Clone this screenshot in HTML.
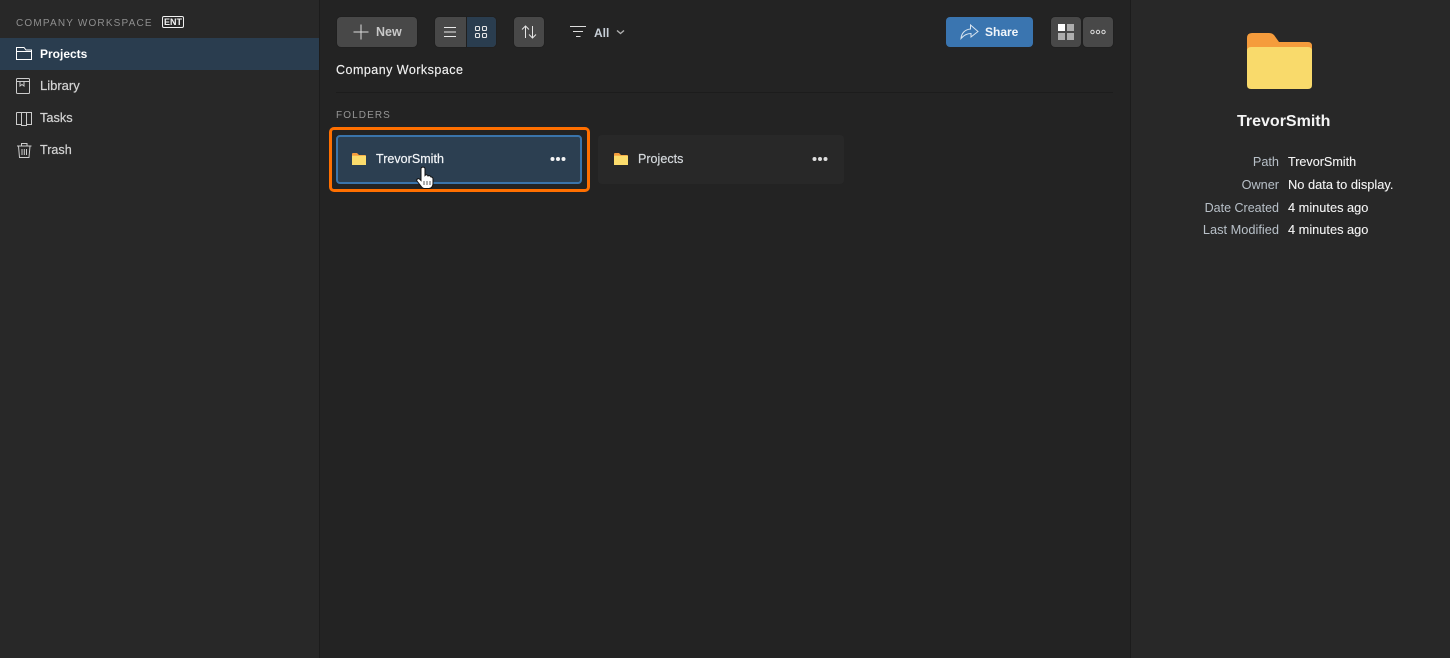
<!DOCTYPE html>
<html><head><meta charset="utf-8"><style>
html,body{margin:0;padding:0;width:1450px;height:658px;overflow:hidden;background:#232323;font-family:"Liberation Sans",sans-serif;color:#fff}
.a{position:absolute}
.t{position:absolute;white-space:nowrap;line-height:16px}
.btn{position:absolute;background:#484848;border-radius:4px;box-shadow:0 0 0 1px #202020}
svg{position:absolute;overflow:visible}
</style></head><body>
<div class="a" style="left:0;top:0;width:319px;height:658px;background:#282828"></div>
<div class="a" style="left:319px;top:0;width:1px;height:658px;background:#1c1c1c"></div>
<div class="a" style="left:1130px;top:0;width:1px;height:658px;background:#1c1c1c"></div>
<div class="a" style="left:1131px;top:0;width:319px;height:658px;background:#282828"></div>
<div class="t" style="left:16px;top:16px;font-size:10px;letter-spacing:1.18px;color:#8f8f8f">COMPANY WORKSPACE</div>
<div class="a" style="left:162px;top:16px;width:22px;height:12px;border:1px solid #f0f0f0;border-radius:2px;box-sizing:border-box;font-size:9px;line-height:10px;text-align:center;font-weight:bold;color:#f4f4f4">ENT</div>
<div class="a" style="left:0;top:38px;width:319px;height:32px;background:#2a3d4f"></div>
<div class="t" style="left:40px;top:46px;font-size:12px;font-weight:bold;color:#fff">Projects</div>
<div class="t" style="left:40px;top:78px;font-size:13px;color:#d4d4d4;-webkit-text-stroke:.2px #d4d4d4">Library</div>
<div class="t" style="left:40px;top:110px;font-size:12.8px;color:#d4d4d4;-webkit-text-stroke:.2px #d4d4d4">Tasks</div>
<div class="t" style="left:40px;top:142px;font-size:12.6px;color:#d4d4d4;-webkit-text-stroke:.2px #d4d4d4">Trash</div>
<svg style="left:0;top:0" width="319" height="170" fill="none" stroke="#e8e8e8" stroke-width="1">
<path d="M16.5 59.5V47.5H24L26 50H31.5V59.5ZM16.5 51.5H31.5" stroke="#fff"/>
<path d="M17.5 78.5H28.5A1 1 0 0 1 29.5 79.5V92.5A1 1 0 0 1 28.5 93.5H17.5A1 1 0 0 1 16.5 92.5V79.5A1 1 0 0 1 17.5 78.5ZM16.5 81.5H29.5M20 81.5V86L22 84.5L24 86V81.5" stroke="#ccc"/>
<path d="M16.5 112.5H31.5V124.5H26.5M16.5 112.5V124.5H21.5M21.5 112.5V125.5H26.5V112.5" stroke="#ccc"/>
<path d="M17 146H31.5M21.5 146V143.5H27V146M18.5 146L19.5 157.5H29L30 146M22 149V155M24.3 149V155M26.5 149V155" stroke="#ccc"/>
</svg>
<div class="btn" style="left:337px;top:17px;width:80px;height:30px"></div>
<svg style="left:337px;top:17px" width="80" height="30"><path d="M24 7.5V22.5M16.5 15H31.5" stroke="#ddd" stroke-width="1"/></svg>
<div class="t" style="left:376px;top:24px;font-size:12.5px;font-weight:bold;color:#c8c8c8">New</div>
<div class="btn" style="left:435px;top:17px;width:61px;height:30px;overflow:hidden"><div class="a" style="left:31px;top:0;width:30px;height:30px;background:#2a3d4f;border-left:1px solid #1f1f1f;box-sizing:border-box"></div></div>
<svg style="left:435px;top:17px" width="61" height="30" fill="none" stroke="#e8e8e8" stroke-width="1.1">
<path d="M9 10.5H21M9 15H21M9 19.5H21"/>
<rect x="40.5" y="9.5" width="4" height="4" rx="1"/><rect x="47.5" y="9.5" width="4" height="4" rx="1"/><rect x="40.5" y="16.5" width="4" height="4" rx="1"/><rect x="47.5" y="16.5" width="4" height="4" rx="1"/>
</svg>
<div class="btn" style="left:514px;top:17px;width:30px;height:30px"></div>
<svg style="left:514px;top:17px" width="30" height="30" fill="none" stroke="#e4e4e4" stroke-width="1">
<path d="M11.5 21V9M8 12.5L11.5 9L15 12.5M18.5 9V21M15 17.5L18.5 21L22 17.5"/>
</svg>
<svg style="left:569px;top:24px" width="60" height="16" fill="none" stroke="#ddd" stroke-width="1">
<path d="M1 2.5H17M4 7.5H14M7 12.5H11.5"/>
<path d="M48 6.5L51.5 9.5L55 6.5" stroke="#b0b0b0" stroke-width="1.4"/>
</svg>
<div class="t" style="left:594px;top:25px;font-size:12px;font-weight:bold;color:#c8d0d8">All</div>
<div class="a" style="left:946px;top:17px;width:87px;height:30px;background:#3a75b0;border-radius:4px"></div>
<svg style="left:946px;top:17px" width="87" height="30" fill="none" stroke="#d8e4f0" stroke-width="1">
<path d="M15 21.5C15.5 16 19 12.5 24.5 12V8L32 14.5L25 20V16.5C21 16.5 18 18 15 21.5Z"/>
</svg>
<div class="t" style="left:985px;top:24px;font-size:12px;font-weight:bold;color:#f0f5fa">Share</div>
<div class="btn" style="left:1051px;top:17px;width:30px;height:30px"></div>
<div class="a" style="left:1058px;top:24px;width:7px;height:7px;background:#fff"></div>
<div class="a" style="left:1067px;top:24px;width:7px;height:7px;background:#adadad"></div>
<div class="a" style="left:1058px;top:33px;width:7px;height:7px;background:#adadad"></div>
<div class="a" style="left:1067px;top:33px;width:7px;height:7px;background:#adadad"></div>
<div class="btn" style="left:1083px;top:17px;width:30px;height:30px"></div>
<svg style="left:1083px;top:17px" width="30" height="30" fill="none" stroke="#ddd" stroke-width="1">
<circle cx="9.5" cy="15" r="1.7"/><circle cx="15" cy="15" r="1.7"/><circle cx="20.5" cy="15" r="1.7"/>
</svg>
<div class="t" style="left:336px;top:62px;font-size:12.5px;letter-spacing:.48px;color:#f0f0f0;-webkit-text-stroke:.15px #f0f0f0">Company Workspace</div>
<div class="a" style="left:336px;top:92px;width:777px;height:1px;background:#1c1c1c"></div>
<div class="t" style="left:336px;top:108px;font-size:10px;letter-spacing:1.1px;color:#969696">FOLDERS</div>
<div class="a" style="left:329px;top:127px;width:261px;height:65px;border:3px solid #ff6f00;border-radius:5px;box-sizing:border-box"></div>
<div class="a" style="left:336px;top:135px;width:246px;height:49px;background:#2c3f51;border:2px solid #3a74ab;border-radius:4px;box-sizing:border-box"></div>
<svg style="left:352px;top:153px" width="14" height="12"><path d="M0 1Q0 0 1 0H5L7 2H13Q14 2 14 3V4H0Z" fill="#f59c3c"/><path d="M0 2.7H14V12H0Z" fill="#fbdc6c"/></svg>
<div class="t" style="left:376px;top:151px;font-size:12.5px;letter-spacing:.03px;color:#f2f5f8;-webkit-text-stroke:.2px #f2f5f8">TrevorSmith</div>
<svg style="left:550px;top:156px" width="18" height="6" fill="#f4f4f4"><circle cx="2.5" cy="3" r="2"/><circle cx="8" cy="3" r="2"/><circle cx="13.5" cy="3" r="2"/></svg>
<div class="a" style="left:598px;top:135px;width:246px;height:49px;background:#282828;border-radius:4px"></div>
<svg style="left:614px;top:153px" width="14" height="12"><path d="M0 1Q0 0 1 0H5L7 2H13Q14 2 14 3V4H0Z" fill="#f59c3c"/><path d="M0 2.7H14V12H0Z" fill="#fbdc6c"/></svg>
<div class="t" style="left:638px;top:151px;font-size:12.5px;letter-spacing:.03px;color:#d4d8dc;-webkit-text-stroke:.2px #d4d8dc">Projects</div>
<svg style="left:812px;top:156px" width="18" height="6" fill="#dedede"><circle cx="2.5" cy="3" r="2"/><circle cx="8" cy="3" r="2"/><circle cx="13.5" cy="3" r="2"/></svg>
<svg style="left:416px;top:166px" width="18" height="23">
<path d="M5 3C5 .5 9 .5 9 3V9.5C10 8.5 11.5 8.5 12 10C13 9.3 14.5 9.7 15 11C15.8 10.8 17 11.5 17 13V17.5C17 20 15.5 22.5 13 22.5H8.5C6.5 22.5 5.5 21 4.5 19.5L1 15C0 13.5 2 12 3.5 13L5 14.5Z" fill="#fff" stroke="#111" stroke-width="1"/>
<path d="M8 15V19M11 15V19M14 15V19" stroke="#333" stroke-width=".8"/>
</svg>
<svg style="left:1247px;top:33px" width="65" height="56">
<path d="M0 5Q0 0 5 0H22Q25 0 27 2L32 9H61Q65 9 65 13V30H0Z" fill="#f59c3c"/>
<path d="M0 18Q0 14 4 14H61Q65 14 65 18V52Q65 56 61 56H4Q0 56 0 52Z" fill="#f9da6b"/>
</svg>
<div class="t" style="left:1237px;top:113px;font-size:16px;line-height:18px;font-weight:bold;color:#f4f4f4">TrevorSmith</div>
<div class="t" style="right:171px;top:154px;font-size:12.7px;color:#b8c0c8">Path</div>
<div class="t" style="right:171px;top:177px;font-size:12.7px;color:#b8c0c8">Owner</div>
<div class="t" style="right:171px;top:200px;font-size:12.5px;color:#b8c0c8">Date Created</div>
<div class="t" style="right:171px;top:222px;font-size:12.8px;color:#b8c0c8">Last Modified</div>
<div class="t" style="left:1288px;top:154px;font-size:12.6px;color:#f4f4f4;-webkit-text-stroke:.1px #f4f4f4">TrevorSmith</div>
<div class="t" style="left:1288px;top:177px;font-size:12.85px;color:#f4f4f4;-webkit-text-stroke:.1px #f4f4f4">No data to display.</div>
<div class="t" style="left:1288px;top:200px;font-size:12.8px;color:#f4f4f4;-webkit-text-stroke:.1px #f4f4f4">4 minutes ago</div>
<div class="t" style="left:1288px;top:222px;font-size:12.8px;color:#f4f4f4;-webkit-text-stroke:.1px #f4f4f4">4 minutes ago</div>
</body></html>
